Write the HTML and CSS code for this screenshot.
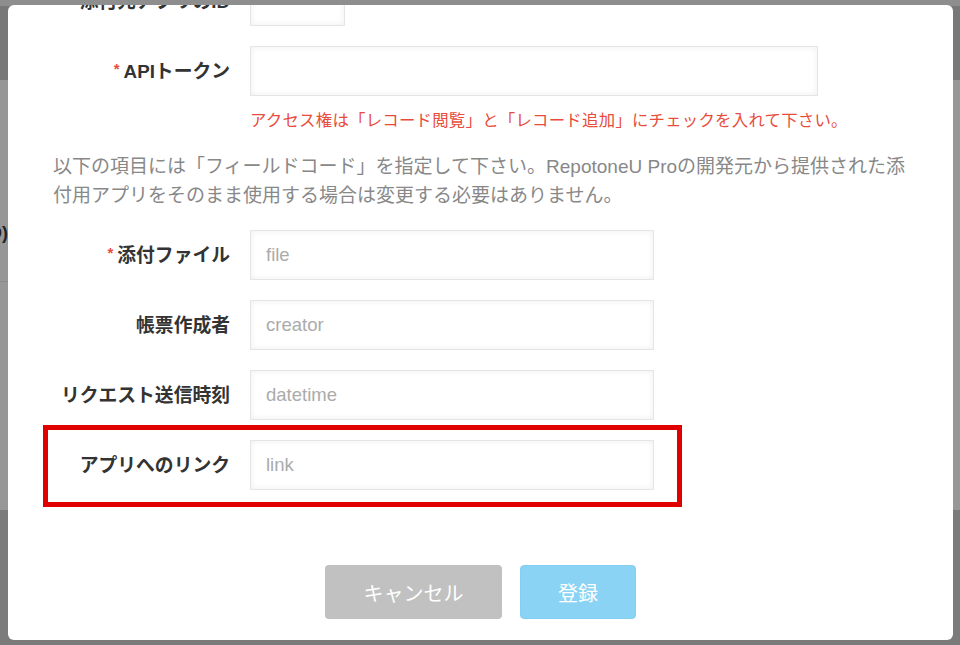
FILE: index.html
```
<!DOCTYPE html>
<html lang="ja">
<head>
    <meta charset="UTF-8">
    <meta name="viewport" content="width=device-width, initial-scale=1.0">
    <title>添付設定</title>
    <link rel="stylesheet" href="styles.css">
</head>
<body>
    <div class="page">
        <div class="page-header"></div>
        <div class="page-main">
            <div class="page-row"><span class="page-label">(ID)</span></div>
        </div>
        <div class="page-footer"></div>
    </div>

    <div class="modal">
        <form class="modal-body">
            <div class="form-row">
                <label class="form-label" for="appId">添付先アプリのID</label>
                <input type="text" id="appId" class="form-input input-short">
            </div>
            <div class="form-row">
                <label class="form-label" for="apiToken"><span class="required">*</span>APIトークン</label>
                <input type="text" id="apiToken" class="form-input input-wide">
            </div>
            <p class="form-error">アクセス権は「レコード閲覧」と「レコード追加」にチェックを入れて下さい。</p>
            <p class="form-note">以下の項目には「フィールドコード」を指定して下さい。RepotoneU Proの開発元から提供された添付用アプリをそのまま使用する場合は変更する必要はありません。</p>
            <div class="form-row">
                <label class="form-label" for="fieldFile"><span class="required">*</span>添付ファイル</label>
                <input type="text" id="fieldFile" class="form-input" placeholder="file">
            </div>
            <div class="form-row">
                <label class="form-label" for="fieldCreator">帳票作成者</label>
                <input type="text" id="fieldCreator" class="form-input" placeholder="creator">
            </div>
            <div class="form-row">
                <label class="form-label" for="fieldDatetime">リクエスト送信時刻</label>
                <input type="text" id="fieldDatetime" class="form-input" placeholder="datetime">
            </div>
            <div class="form-row highlight">
                <label class="form-label" for="fieldLink">アプリへのリンク</label>
                <input type="text" id="fieldLink" class="form-input" placeholder="link">
            </div>
        </form>
        <div class="modal-footer">
            <button type="button" class="cancel-button">キャンセル</button>
            <button type="button" class="save-button">登録</button>
        </div>
    </div>
</body>
</html>
```

FILE: styles.css
```
html, body {
    margin: 0;
    height: 100%;
    overflow: hidden;
}
body {
    font-family: "Liberation Sans", "Noto Sans CJK JP", sans-serif;
    background-color: #7b7b7b;
}
.page {
    display: flex;
    flex-direction: column;
    height: 100%;
}
.page-header {
    height: 74px;
    background-color: #787878;
    border-top: 6px solid #8e8e8e;
}
.page-main {
    height: 430px;
    background-color: #979797;
}
.page-row {
    width: 100px;
    height: 202px;
    border-bottom: 1px solid #8a8a8a;
    box-sizing: border-box;
    padding-top: 143px;
}
.page-label {
    display: block;
    margin-left: -30px;
    width: 38px;
    text-align: right;
    font-weight: bold;
    font-size: 18px;
    color: #222;
}
.page-footer {
    flex: 1;
    background-color: #7b7b7b;
}

/* dialog */
.modal {
    position: absolute;
    top: 5px;
    left: 8px;
    width: 945px;
    height: 635px;
    background-color: #fff;
    border-radius: 6px;
    overflow: hidden;
    box-sizing: border-box;
}
.modal-body {
    margin: -29px 0 0;
    padding: 0 38px 0 45px;
}
.form-row {
    display: flex;
    align-items: center;
    gap: 20px;
    margin-bottom: 20px;
}
.form-label {
    width: 177px;
    flex-shrink: 0;
    text-align: right;
    font-size: 18.8px;
    font-weight: bold;
    color: #333;
    margin-top: -3px;
}
.required {
    color: #e74c3c;
    font-size: 15px;
    vertical-align: 4px;
    margin-right: 4px;
}
.form-input {
    width: 404px;
    height: 50px;
    box-sizing: border-box;
    padding: 0 15px;
    border: 1px solid #e2e6e6;
    border-radius: 0;
    background-color: #fff;
    box-shadow: inset 0 0 6px rgba(0, 0, 0, 0.07);
    font-family: "Liberation Sans", "Noto Sans CJK JP", sans-serif;
    font-size: 18.5px;
    color: #333;
}
.form-input::placeholder {
    color: #ababab;
}
.input-short {
    width: 95px;
}
.input-wide {
    width: 568px;
}
.form-error {
    margin: -8px 0 0 197px;
    font-size: 16.4px;
    letter-spacing: 0.25px;
    line-height: 24px;
    color: #e74c3c;
}
.form-note {
    margin: 20px 0 20px;
    font-size: 19px;
    line-height: 29px;
    color: #888;
}
.highlight {
    position: relative;
}
.highlight::after {
    content: "";
    position: absolute;
    left: -10px;
    top: -15px;
    width: 639px;
    height: 82px;
    border: 5px solid #e00000;
    box-sizing: border-box;
}
.modal-footer {
    display: flex;
    justify-content: center;
    gap: 18px;
    margin-top: 75px;
}
.cancel-button, .save-button {
    height: 54px;
    border: none;
    border-radius: 4px;
    color: #fff;
    font-family: "Liberation Sans", "Noto Sans CJK JP", sans-serif;
    font-size: 20px;
    cursor: pointer;
}
.cancel-button {
    width: 177px;
    background-color: #c1c1c1;
}
.save-button {
    width: 116px;
    background-color: #8bd3f5;
    border: 1px solid #84cff1;
}
```
